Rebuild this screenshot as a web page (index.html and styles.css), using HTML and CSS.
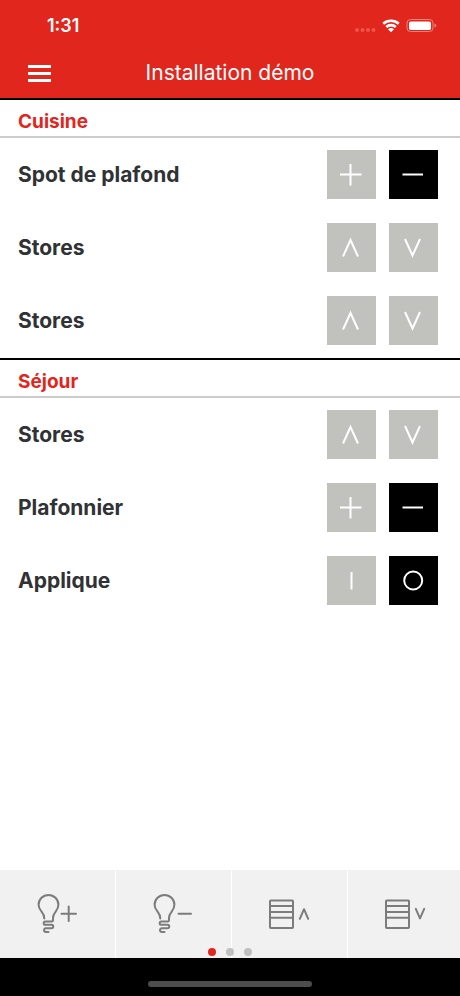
FILE: index.html
```html
<!DOCTYPE html>
<html lang="fr">
<head>
<meta charset="utf-8">
<meta name="viewport" content="width=device-width, initial-scale=1">
<title>Installation démo</title>
<link rel="stylesheet" href="styles.css">
</head>
<body>
<svg class="sprite" aria-hidden="true">
  <symbol id="plus" viewBox="0 0 49 49"><path d="M13 24.500H34.500M23.500 14V35.500"/></symbol>
  <symbol id="minus" viewBox="0 0 49 49"><path d="M13.500 24.500H34"/></symbol>
  <symbol id="up" viewBox="0 0 49 49"><path d="M16 33.500L23.500 17L31 33.500"/></symbol>
  <symbol id="down" viewBox="0 0 49 49"><path d="M16 16L23.500 32.500L31 16"/></symbol>
  <symbol id="on" viewBox="0 0 49 49"><path d="M24.500 16V33.500"/></symbol>
  <symbol id="off" viewBox="0 0 49 49"><circle cx="24.200" cy="24.500" r="9"/></symbol>
  <symbol id="bulb" viewBox="0 0 49 48"><path d="M11.300 28.500C11.300 21.500 5.600 21.500 5.600 14.800A9.900 9.900 0 0 1 25.400 14.800C25.400 21.500 20 21.500 20 28V30C20 31 19.500 31.500 18.500 31.500H12.300C10.200 31.500 10.200 34.800 12.300 34.800H18.500C20.800 34.800 20.800 38.300 18.500 38.300H12.800C10.300 38.300 10.500 42 13 42H15.500"/></symbol>
  <symbol id="blind" viewBox="0 0 49 48"><rect x="5" y="10.500" width="23" height="27.500" rx=".7"/><path d="M5 16H28M5 22H28M5 27.700H28"/></symbol>
</svg>
<div class="app">
  <header class="top">
    <div class="status">
      <span class="time">1:31</span>
      <svg class="indicators" viewBox="0 0 84 18" aria-label="Réseau, Wi-Fi, batterie">
        <g class="signal"><circle cx="3" cy="13" r="2"/><circle cx="8.500" cy="13" r="2"/><circle cx="14" cy="13" r="2"/><circle cx="19.500" cy="13" r="2"/></g>
        <g class="wifi"><path d="M29.200 6.700A12 12 0 0 1 44.800 6.700"/><path d="M32.200 10A7.200 7.200 0 0 1 41.800 10"/></g>
        <path class="solid" d="M34 12.300Q37 9.800 40 12.300L37 15.300Z"/>
        <rect class="case" x="53" y="2.500" width="26" height="12" rx="3.500"/>
        <path class="tip" d="M80.500 6.500Q82.300 7 82.300 8.500Q82.300 10 80.500 10.500Z"/>
        <rect class="solid" x="55" y="4.500" width="22" height="8.500" rx="1.800"/>
      </svg>
    </div>
    <div class="nav">
      <button class="menu" aria-label="Menu"><span></span><span></span><span></span></button>
      <h1>Installation démo</h1>
    </div>
  </header>
  <main>
    <section>
      <h2>Cuisine</h2>
      <ul>
        <li><span>Spot de plafond</span><button class="key" aria-label="Plus"><svg><use href="#plus"/></svg></button><button class="key active" aria-label="Moins"><svg><use href="#minus"/></svg></button></li>
        <li><span>Stores</span><button class="key" aria-label="Monter"><svg><use href="#up"/></svg></button><button class="key" aria-label="Descendre"><svg><use href="#down"/></svg></button></li>
        <li><span>Stores</span><button class="key" aria-label="Monter"><svg><use href="#up"/></svg></button><button class="key" aria-label="Descendre"><svg><use href="#down"/></svg></button></li>
      </ul>
    </section>
    <section>
      <h2>Séjour</h2>
      <ul>
        <li><span>Stores</span><button class="key" aria-label="Monter"><svg><use href="#up"/></svg></button><button class="key" aria-label="Descendre"><svg><use href="#down"/></svg></button></li>
        <li><span>Plafonnier</span><button class="key" aria-label="Plus"><svg><use href="#plus"/></svg></button><button class="key active" aria-label="Moins"><svg><use href="#minus"/></svg></button></li>
        <li><span>Applique</span><button class="key" aria-label="Allumer"><svg><use href="#on"/></svg></button><button class="key active" aria-label="Éteindre"><svg><use href="#off"/></svg></button></li>
      </ul>
    </section>
  </main>
  <footer>
    <div class="scenes">
      <button aria-label="Lumières plus"><svg viewBox="0 0 49 48"><use href="#bulb"/><path d="M28.500 23.700H43M35.700 16.500V31"/></svg></button>
      <button aria-label="Lumières moins"><svg viewBox="0 0 49 48"><use href="#bulb"/><path d="M29.500 23.700H42"/></svg></button>
      <button aria-label="Monter les stores"><svg viewBox="0 0 49 48"><use href="#blind"/><path d="M34.800 28.800L39 19.200L43.200 28.800"/></svg></button>
      <button aria-label="Descendre les stores"><svg viewBox="0 0 49 48"><use href="#blind"/><path d="M34.800 18.800L39 28.400L43.200 18.800"/></svg></button>
    </div>
    <div class="dots"><i class="current"></i><i></i><i></i></div>
    <div class="home"><span></span></div>
  </footer>
</div>
</body>
</html>
```
FILE: styles.css
```css
* { box-sizing: border-box; }
body {
  margin: 0;
  background: #fff;
  color: #303234;
  font-family: Inter, "Liberation Sans", sans-serif;
}
h1, h2, ul { margin: 0; padding: 0; }
button { padding: 0; border: 0; background: none; }
svg { display: block; fill: none; }
.sprite { position: absolute; width: 0; height: 0; }
.app { display: flex; flex-direction: column; min-height: 100vh; }

.top { background: #e1261d; color: #fff; }
.status {
  display: flex;
  align-items: center;
  justify-content: space-between;
  height: 48px;
  padding: 4px 22px 0 47px;
}
.time { font-size: 18px; font-weight: 600; line-height: 24px; }
.indicators { width: 84px; height: 18px; }
.signal { fill: #ee5549; }
.wifi { stroke: #fff; stroke-width: 2.6; }
.solid { fill: #fff; }
.case { stroke: #f0847c; stroke-width: 1; }
.tip { fill: #f0847c; }
.nav {
  display: grid;
  grid-template-columns: 24px 1fr 24px;
  align-items: center;
  height: 50px;
  padding: 0 28px;
}
.menu { display: grid; gap: 4px; width: 23px; }
.menu span { height: 3px; background: #fff; }
h1 { font-size: 21px; font-weight: 400; line-height: 28px; text-align: center; }

main { flex: 1; }
section { border-top: 2px solid #000; }
h2 {
  padding: 10px 18px 2px;
  border-bottom: 2px solid #ccc;
  color: #e1261d;
  font-size: 19px;
  font-weight: 700;
  line-height: 24px;
}
ul { padding-bottom: 1px; list-style: none; }
li {
  display: flex;
  align-items: center;
  gap: 13px;
  height: 73px;
  padding: 0 22px 0 18px;
  font-size: 21px;
  font-weight: 700;
  line-height: 28px;
}
li span { flex: 1; }
.key { background: #c1c2bd; }
.key svg { width: 49px; height: 49px; stroke: #fff; stroke-width: 2; }
.active { background: #000; }

footer { position: relative; }
.scenes { display: flex; height: 88px; overflow: hidden; background: #f1f1f1; }
.scenes button {
  display: flex;
  flex: 0 0 calc(25% + 1px);
  align-items: center;
  justify-content: center;
  border-right: 1px solid #fff;
}
.scenes svg {
  width: 49px;
  height: 48px;
  stroke: #7c7c7c;
  stroke-width: 2;
  stroke-linecap: round;
  stroke-linejoin: round;
}
.dots {
  position: absolute;
  right: 0;
  bottom: 40px;
  left: 0;
  display: flex;
  justify-content: center;
  gap: 10px;
}
.dots i { width: 8px; height: 8px; border-radius: 50%; background: #c0c0c0; }
.dots .current { background: #e1261d; }
.home {
  display: flex;
  align-items: center;
  justify-content: center;
  height: 38px;
  padding-top: 14px;
  background: #000;
}
.home span { width: 164px; height: 6px; border-radius: 3px; background: #4c4c4c; }
```
